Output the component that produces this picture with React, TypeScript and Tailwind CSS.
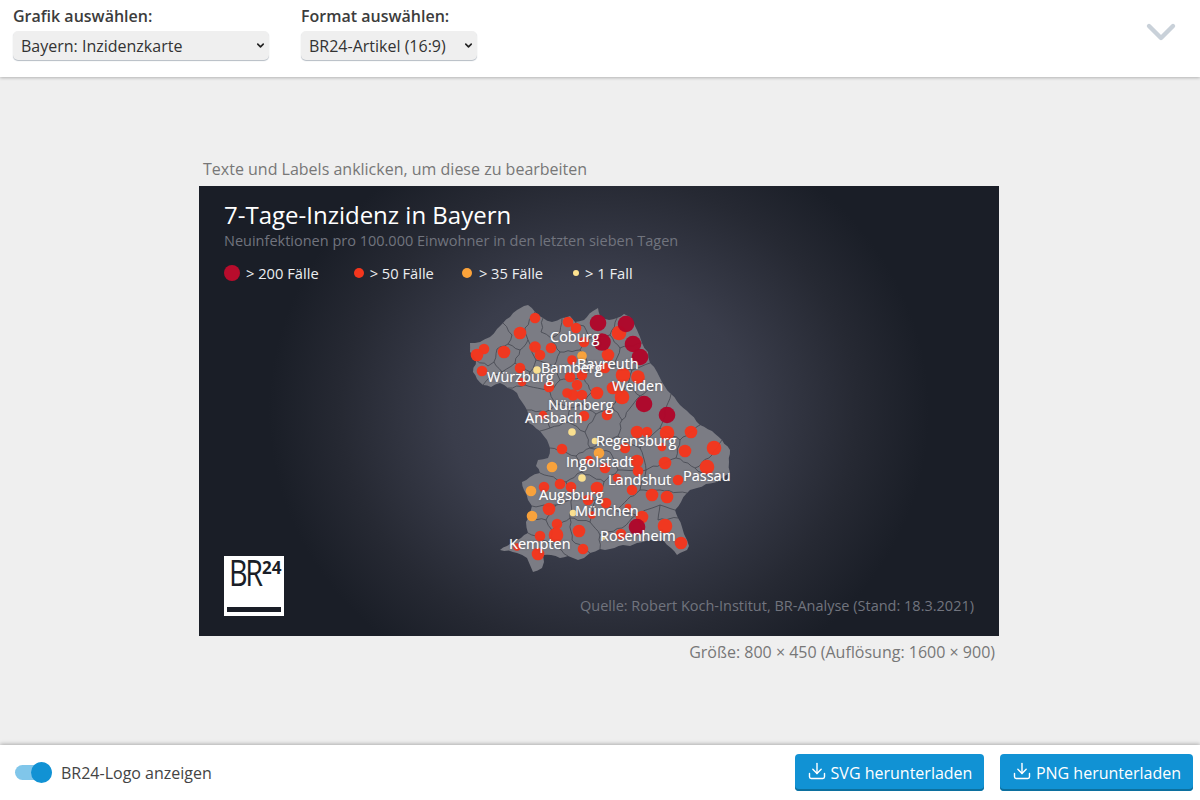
import React from 'react';
import { ChevronDown, Download } from 'lucide-react';

// macht aus geraden Linien die zackigen Grenzen der Karte
const jag = (pts: number[][], amp: number) => {
  const out: number[][] = [];
  pts.forEach((p, i) => {
    const q = pts[i + 1];
    out.push(p);
    if (!q) return;
    const dx = q[0] - p[0];
    const dy = q[1] - p[1];
    const len = Math.hypot(dx, dy) || 1;
    const steps = Math.max(1, Math.floor(len / 4));
    for (let s = 1; s < steps; s++) {
      const t = s / steps;
      const seed = Math.sin(p[0] * 12.9 + p[1] * 78.2 + s * 37.7) * 43758.5;
      const off = ((seed - Math.floor(seed)) - 0.5) * 2 * amp;
      out.push([p[0] + dx * t - (dy / len) * off, p[1] + dy * t + (dx / len) * off]);
    }
  });
  return out;
};

const parsePts = (s: string) => s.trim().split(/\s+/).map(c => c.split(',').map(Number));
const toStr = (pts: number[][]) => pts.map(p => `${p[0].toFixed(1)},${p[1].toFixed(1)}`).join(' ');

const OUTLINE_RAW =
  '510,317 517,310 528,305 535,312 543,318 552,322 562,318 570,316 575,322 584,320 593,311 598,308 600,316 609,320 617,318 624,314 630,317 634,324 637,330 640,337 642,343 648,352 650,363 657,372 662,382 671,394 680,405 690,414 700,425 712,431 722,440 730,450 729,462 730,473 722,478 717,482 706,484 697,488 690,490 687,493 681,502 675,510 678,518 682,527 684,534 687,540 689,546 687,550 680,553 677,555 671,548 663,540 650,540 637,543 630,546 623,545 610,549 600,549 590,553 584,558 578,560 568,556 560,558 551,555 543,555 544,562 542,568 533,572 530,565 527,558 517,553 500,550 507,546 513,542 521,538 528,533 526,522 530,513 532,506 528,500 524,490 522,482 530,477 540,473 536,466 538,460 548,458 550,448 547,440 540,431 529,423 527,410 522,402 517,393 508,388 500,383 491,387 483,385 477,379 473,372 476,360 470,352 470,343 480,342 490,337 497,329 503,323 510,317';
const OUTLINE = toStr(jag(parsePts(OUTLINE_RAW), 0.9));

// Kreisgrenzen
const BORDERS = [
  '503,323 512,335 508,344 520,350 528,340 525,328 535,312',
  '543,318 541,332 551,338 560,332 562,318',
  '508,344 497,349 494,362 502,372 515,363 520,350',
  '476,360 488,366 494,362',
  '483,385 490,377 502,372',
  '528,340 536,360 530,372 515,363',
  '530,372 525,385 508,388',
  '551,338 560,352 554,366 536,360',
  '554,366 560,380 550,392 525,385',
  '560,352 580,350 590,338 584,326 575,322',
  '580,350 590,365 584,378 560,380',
  '590,338 610,335 617,318',
  '610,335 620,348 642,343',
  '620,348 615,366 590,365',
  '615,366 632,370 650,363',
  '632,370 628,385 640,396 662,382',
  '584,378 592,392 582,404 596,414 612,406 628,385',
  '550,392 556,404 545,412 527,410',
  '556,404 570,408 582,404',
  '545,412 550,428 568,422 570,408',
  '550,428 540,431',
  '568,422 585,432 596,414',
  '612,406 622,420 640,396',
  '622,420 618,436 640,448 660,428 671,394',
  '585,432 590,448 576,456 550,448',
  '590,448 618,436',
  '660,428 680,440 700,425',
  '680,440 676,458 695,468 717,482',
  '695,468 712,455 722,440',
  '640,448 646,470 676,458',
  '646,470 640,490 660,490 687,493',
  '576,456 582,472 566,482 540,473',
  '582,472 604,482 618,470 610,452 590,448',
  '618,470 646,470',
  '566,482 572,498 556,505 532,506',
  '572,498 596,500 604,482',
  '596,500 615,510 640,490',
  '556,505 546,520 528,518',
  '546,520 552,530 570,518 572,498',
  '570,518 590,522 596,500',
  '615,510 636,515 660,505 675,510',
  '636,515 645,540',
  '590,522 600,535 622,528 636,515',
  '600,535 600,549',
  '552,530 550,543 528,533',
  '550,543 568,556',
  '570,518 572,540 590,553',
  '660,505 658,520 678,518',
].map(s => toStr(jag(parsePts(s), 1.1)));

// [x, y, r]
const DARK = [[598, 323, 8], [626, 324, 8], [602, 342, 8.5], [633, 344, 8], [640, 357, 8], [644, 404, 8], [667, 415, 8], [637, 527, 8]];
const RED = [
  [535, 318, 5], [520, 333, 6], [568, 322, 5], [576, 328, 5], [619, 333, 7], [504, 352, 6], [484, 349, 5], [477, 355, 6], [482, 371, 5],
  [535, 347, 5.5], [540, 355, 5], [551, 348, 5], [584, 342, 5], [608, 355, 6], [572, 360, 4.5], [520, 368, 5], [522, 382, 4], [549, 387, 5],
  [570, 377, 5], [582, 375, 5], [577, 385, 5], [573, 395, 5.5], [567, 393, 4.5], [582, 395, 5], [597, 393, 6], [613, 388, 6], [622, 397, 7],
  [623, 375, 7], [638, 377, 6.5], [605, 368, 5], [607, 415, 5], [584, 416, 5], [543, 415, 4], [637, 432, 6], [647, 432, 5], [667, 433, 7],
  [691, 432, 6], [562, 449, 5], [685, 451, 6], [714, 448, 7], [662, 447, 4], [625, 448, 5], [637, 461, 6], [665, 463, 6], [707, 467, 7],
  [638, 471, 5], [605, 468, 5], [589, 460, 4], [617, 478, 4], [678, 480, 5], [544, 487, 5], [560, 484, 5], [571, 487, 5], [597, 488, 6],
  [632, 490, 5], [652, 495, 6], [667, 497, 6], [588, 500, 5], [606, 503, 5], [549, 509, 6], [642, 517, 6], [665, 526, 7], [557, 524, 5],
  [540, 536, 5], [556, 535, 7], [579, 531, 6], [621, 534, 5], [628, 507, 3], [592, 515, 3.5], [583, 549, 5], [538, 554, 6], [517, 547, 3.5], [681, 543, 6],
];
const ORANGE = [[582, 356, 4.5], [599, 453, 5], [552, 467, 5], [531, 491, 5], [532, 516, 5]];
const YELLOW = [[537, 370, 3.5], [572, 432, 3.5], [595, 441, 3], [582, 478, 3.5], [573, 513, 3], [604, 538, 1.5]];

const LABELS: [string, number, number][] = [
  ['Coburg', 550, 337],
  ['Bayreuth', 577, 364],
  ['Bamberg', 541, 368],
  ['Weiden', 612, 386],
  ['Würzburg', 487, 377],
  ['Nürnberg', 548, 405],
  ['Ansbach', 525, 418],
  ['Regensburg', 596, 441],
  ['Ingolstadt', 566, 462],
  ['Landshut', 608, 480],
  ['Passau', 683, 476],
  ['Augsburg', 539, 495],
  ['München', 575, 511],
  ['Rosenheim', 600, 536],
  ['Kempten', 509, 544],
];

const LEGEND = [
  { label: '> 200 Fälle', dot: 'w-4 h-4 bg-[#b80c2c]', box: 'w-4 mr-[6px]', gap: 'mr-[35px]' },
  { label: '> 50 Fälle', dot: 'w-[10px] h-[10px] bg-[#f4361d]', box: 'w-[10px] mr-[6px]', gap: 'mr-[28px]' },
  { label: '> 35 Fälle', dot: 'w-[10px] h-[10px] bg-[#fca33a]', box: 'w-[10px] mr-[7px]', gap: 'mr-[30px]' },
  { label: '> 1 Fall', dot: 'w-[6px] h-[6px] bg-[#fde28f]', box: 'w-[6px] mr-[6px]', gap: '' },
];

const Dots = ({ items, fill }: { items: number[][]; fill: string }) => (
  <>
    {items.map(([x, y, r]) => (
      <circle key={`${x}-${y}`} cx={x} cy={y} r={r + 0.3} fill={fill} fillOpacity={0.97} />
    ))}
  </>
);

const Picker = ({ label, value, width }: { label: string; value: string; width: string }) => (
  <div className={width}>
    <label className="block text-[16px] leading-[20px] font-semibold text-[#3c3c3c] mb-[5px]">{label}</label>
    <div className="relative">
      <select
        defaultValue={value}
        className="w-full h-[29px] appearance-none rounded-[5px] bg-[#efefef] pl-2 text-[16px] leading-[22px] text-[#333] shadow-[0_1px_1px_#b5bcc4] outline-none"
      >
        <option>{value}</option>
      </select>
      <ChevronDown size={11} strokeWidth={3.5} className="absolute right-[3px] top-[9px] text-[#222] pointer-events-none" />
    </div>
  </div>
);

const DownloadButton = ({ label, width }: { label: string; width: string }) => (
  <button className={`${width} h-[37px] flex items-center justify-center gap-[4px] rounded-[4px] bg-[#1192d4] text-white text-[16px] font-medium shadow-[inset_0_-2px_0_#0c709f]`}>
    <Download size={20} strokeWidth={1.7} className="mb-[3px]" />
    {label}
  </button>
);

export default function App() {
  return (
    <div className="w-[1200px] h-[800px] overflow-hidden flex flex-col bg-[#efefef] font-['Open_Sans',sans-serif]">
      <header className="relative z-10 h-[77px] shrink-0 bg-white shadow-[0_1px_3px_rgba(0,0,0,0.25)] flex items-start pt-[6px] pl-[13px] pr-[15px]">
        <Picker label="Grafik auswählen:" value="Bayern: Inzidenzkarte" width="w-[256px] mr-[32px]" />
        <Picker label="Format auswählen:" value="BR24-Artikel (16:9)" width="w-[176px]" />
        <ChevronDown size={48} strokeWidth={2.2} className="ml-auto mt-[2px] text-[#c9d1d9]" />
      </header>

      <main className="flex-1 flex flex-col items-center pt-[80px]">
        <div className="w-[800px] mr-[2px]">
          <p className="pl-1 text-[16px] leading-[24px] text-[#777] mb-[5px]">Texte und Labels anklicken, um diese zu bearbeiten</p>
          <div className="relative w-[800px] h-[450px] overflow-hidden bg-[#1a1e27] bg-[radial-gradient(ellipse_330px_300px_at_400px_225px,#474b5a_0%,#3a3d4b_45%,#262933_78%,#1a1e27_100%)] text-white">
            <svg className="absolute left-0 top-0" width="800" height="450" viewBox="199 186 800 450">
              <polygon points={OUTLINE} fill="#7b7c84" />
              {BORDERS.map(pts => (
                <polyline key={pts} points={pts} fill="none" stroke="#44464f" strokeWidth="0.8" />
              ))}
              <Dots items={RED} fill="#f4361d" />
              <Dots items={DARK} fill="#b0062a" />
              <Dots items={ORANGE} fill="#fca33a" />
              <Dots items={YELLOW} fill="#fde28f" />
            </svg>

            {LABELS.map(([name, x, y]) => (
              <span
                key={name}
                className="absolute text-[14.5px] leading-[20px] text-white whitespace-nowrap [text-shadow:0_0_1px_rgba(255,255,255,0.5),0_0_2px_rgba(40,40,50,0.6)]"
                style={{ left: x - 199, top: y - 186 - 10 }}
              >
                {name}
              </span>
            ))}

            <div className="relative pl-[25px] pt-[12px]">
              <h1 className="text-[24px] leading-[33px] font-medium text-white">7-Tage-Inzidenz in Bayern</h1>
              <p className="text-[14.5px] leading-[19px] text-[#71747e]">Neuinfektionen pro 100.000 Einwohner in den letzten sieben Tagen</p>
              <div className="flex items-center mt-[13px] h-[20px] text-[14.7px] text-[#eceef0]">
                {LEGEND.map(l => (
                  <div key={l.label} className={`flex items-center ${l.gap}`}>
                    <div className={`${l.box} flex items-center justify-center`}>
                      <span className={`${l.dot} rounded-full shrink-0`} />
                    </div>
                    <span>{l.label}</span>
                  </div>
                ))}
              </div>
            </div>

            <div className="absolute left-[25px] top-[370px] w-[60px] h-[60px] bg-white text-[#1a1e27]">
              <span className="absolute left-[5px] top-[-2px] text-[36px] leading-[38px] tracking-[-3px] font-medium origin-left scale-x-[0.8]">BR</span>
              <span className="absolute left-[38px] top-[2px] text-[17px] leading-[20px] font-bold">24</span>
              <div className="absolute left-[3px] right-[3px] top-[51px] h-[5px] bg-[#1a1e27]" />
            </div>

            <p className="absolute right-[25px] top-[410px] text-[14.5px] leading-[20px] text-[#71747e]">Quelle: Robert Koch-Institut, BR-Analyse (Stand: 18.3.2021)</p>
          </div>
          <p className="pr-1 pt-[4px] text-right text-[16px] leading-[24px] text-[#777]">Größe: 800 × 450 (Auflösung: 1600 × 900)</p>
        </div>
      </main>

      <footer className="relative z-10 h-[55px] shrink-0 bg-white shadow-[0_-1px_4px_rgba(0,0,0,0.28)] flex items-center pl-[15px] pr-[7px]">
        <div className="relative w-[37px] h-[15px] rounded-full bg-[#80c6ea] mr-[9px]">
          <span className="absolute right-0 top-[-3px] w-[21px] h-[21px] rounded-full bg-[#1192d4]" />
        </div>
        <span className="text-[16px] text-[#444]">BR24-Logo anzeigen</span>
        <div className="ml-auto flex gap-4">
          <DownloadButton label="SVG herunterladen" width="w-[189px]" />
          <DownloadButton label="PNG herunterladen" width="w-[193px]" />
        </div>
      </footer>
    </div>
  );
}
